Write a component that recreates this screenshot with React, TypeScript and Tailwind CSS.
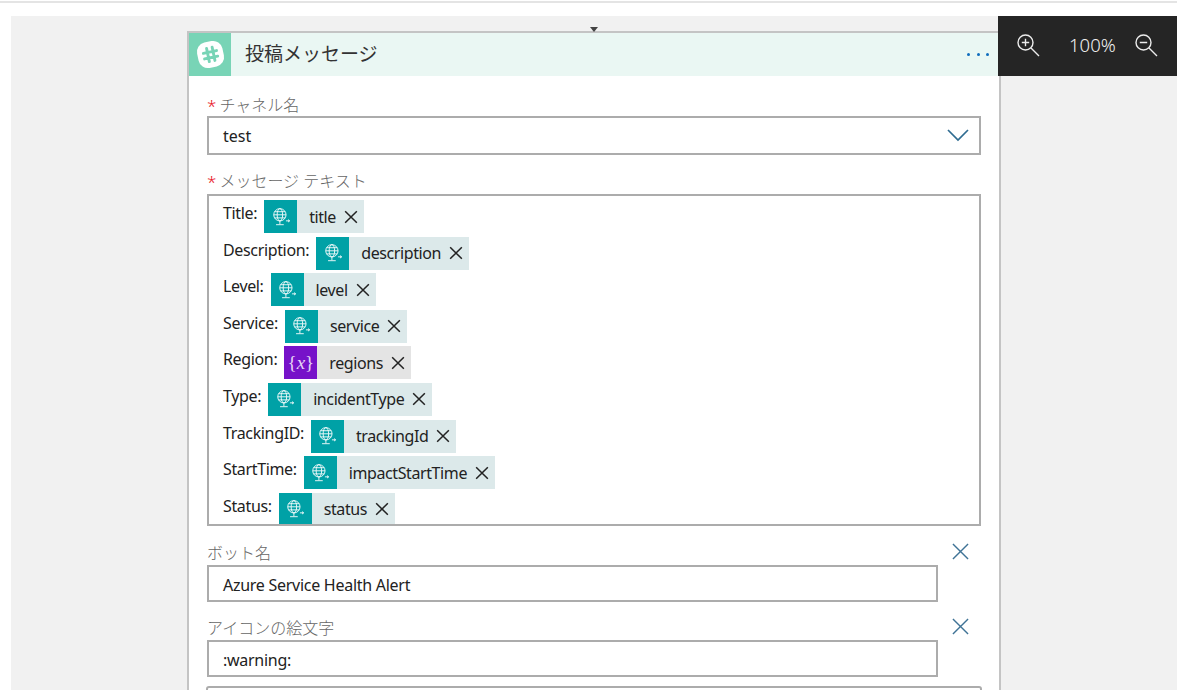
import React from "react"

const FONT = "font-['Noto_Sans','Noto_Sans_CJK_JP',sans-serif]"

type Row = { label: string; token: string; kind?: "var" }

const rows: Row[] = [
    { label: "Title:", token: "title" },
    { label: "Description:", token: "description" },
    { label: "Level:", token: "level" },
    { label: "Service:", token: "service" },
    { label: "Region:", token: "regions", kind: "var" },
    { label: "Type:", token: "incidentType" },
    { label: "TrackingID:", token: "trackingId" },
    { label: "StartTime:", token: "impactStartTime" },
    { label: "Status:", token: "status" },
]

const GlobeIcon = () => (
    <svg width="22" height="22" viewBox="0 0 20 20" fill="none" stroke="#fff" strokeWidth="0.8">
        <circle cx="9" cy="8" r="5.6" />
        <ellipse cx="9" cy="8" rx="2.5" ry="5.6" />
        <path d="M3.4 8h11.2M4.2 5.2h9.6M4.2 10.8h9.6M9 13.6v3M5.5 17h7M14.5 13.5h3.2" />
        <path d="M16.4 12.4l1.5 1.1-1.5 1.1" />
    </svg>
)

const SmallX = () => (
    <svg width="14" height="14" viewBox="0 0 12 12" stroke="#222" strokeWidth="1.3" className="shrink-0">
        <path d="M1 1l10 10M11 1L1 11" />
    </svg>
)

const BlueX = () => (
    <svg width="17" height="17" viewBox="0 0 18 18" stroke="#3f7396" strokeWidth="1.5">
        <path d="M1 1l16 16M17 1L1 17" />
    </svg>
)

const Token = ({ name, kind }: { name: string; kind?: "var" }) => (
    <span className={`flex h-[33px] items-center ${kind === "var" ? "bg-[#e4e4e4]" : "bg-[#dce9ea]"}`}>
        <span className={`flex h-[33px] w-[33px] items-center justify-center ${kind === "var" ? "bg-[#7612c9]" : "bg-[#00a1a6]"}`}>
            {kind === "var"
                ? <span className="font-['Liberation_Serif',serif] text-[19px] text-[#e6d5f5]">{"{"}<i>x</i>{"}"}</span>
                : <GlobeIcon />}
        </span>
        <span className="ml-[12px] text-[16px] leading-none tracking-[-0.4px] text-[#222]">{name}</span>
        <span className="ml-[8px] mr-[6px] flex"><SmallX /></span>
    </span>
)

const Label = ({ text, required }: { text: string; required?: boolean }) => (
    <div className="flex h-[22px] items-center text-[16px] font-light leading-none text-[#666]">
        {required && <span className="mr-[3px] text-[17px] text-[#e81123]">*</span>}
        {text}
    </div>
)

const OptionalField = ({ label, value }: { label: string; value: string }) => (
    <div className="flex">
        <div className="w-[731px]">
            <div className="mb-[1px]"><Label text={label} /></div>
            <div className="flex h-[37px] items-center border-2 border-[#acacac] pl-[14px] pt-[3px] text-[16px] tracking-[-0.27px] text-[#222]">{value}</div>
        </div>
        <div className="ml-[14px] pt-[1px]"><BlueX /></div>
    </div>
)

export default function App() {
    return (
        <div className={`relative h-[690px] w-[1200px] overflow-hidden bg-white ${FONT}`}>
            <div className="mt-[1px] h-[2px] w-[1177px] bg-[#e4e4e4]" />
            <div className="ml-[11px] mt-[13px] h-[674px] w-[1166px] bg-[#f1f1f1] pt-[15px]">
                <div className="ml-[176px] h-[700px] w-[814px] border-x-2 border-t-2 border-[#c4c4c4] bg-white">
                    <div className="flex h-[43px] items-center bg-[#eaf7f3]">
                        <div className="flex h-[43px] w-[42px] items-center justify-center bg-[#78d4b6]">
                            <svg width="31" height="31" viewBox="0 0 30 30">
                                <g transform="rotate(-12 15 15)">
                                    <rect x="2.500" y="2.500" width="25" height="25" rx="9" fill="#fff" />
                                    <path d="M12.500 8.500v13M18 8.500v13M8.500 12.500h13M8.500 18h13" stroke="#78d4b6" strokeWidth="2.800" strokeLinecap="round" fill="none" />
                                </g>
                            </svg>
                        </div>
                        <div className="ml-[14px] text-[19px] text-[#333]">投稿メッセージ</div>
                        <div className="ml-auto mr-[10px] flex gap-[6.500px]">
                            <span className="h-[3px] w-[3px] rounded-full bg-[#0f6cbd]" />
                            <span className="h-[3px] w-[3px] rounded-full bg-[#0f6cbd]" />
                            <span className="h-[3px] w-[3px] rounded-full bg-[#0f6cbd]" />
                        </div>
                    </div>
                    <div className="px-[18px] pt-[18px]">
                        <Label text="チャネル名" required />
                        <div className="flex h-[39px] items-center justify-between border-2 border-[#acacac] pl-[14px] pr-[10px] text-[16px] text-[#222]">
                            test
                            <svg width="22" height="13" viewBox="0 0 22 13" fill="none" stroke="#2f6c91" strokeWidth="1.7">
                                <path d="M1 1l10 10L21 1" />
                            </svg>
                        </div>
                        <div className="mb-[2px] mt-[15px]"><Label text="メッセージ テキスト" required /></div>
                        <div className="h-[332px] overflow-hidden border-2 border-[#acacac] pl-[14px] pt-[4px]">
                            <div className="flex flex-col gap-[3.6px]">
                                {rows.map((r) => (
                                    <div key={r.label} className="flex items-start gap-[7px]">
                                        <span className="text-[16px] leading-[26px] tracking-[-0.35px] text-[#222]">{r.label}</span>
                                        <Token name={r.token} kind={r.kind} />
                                    </div>
                                ))}
                            </div>
                        </div>
                        <div className="mt-[16px] flex flex-col gap-[15px]">
                            <OptionalField label="ボット名" value="Azure Service Health Alert" />
                            <OptionalField label="アイコンの絵文字" value=":warning:" />
                        </div>
                        <div className="-mx-px mt-[9px] h-[20px] rounded-t-[3px] border-2 border-[#acacac]" />
                    </div>
                </div>
            </div>
            <div className="absolute left-[590px] top-[27px] h-0 w-0 border-x-[4px] border-t-[5px] border-x-transparent border-t-[#444]" />
            <div className="absolute left-[998px] top-[16px] flex h-[60px] w-[179px] items-center bg-[#252525] pb-[2px] text-white">
                <svg width="24" height="24" viewBox="0 0 24 24" fill="none" stroke="#ececec" strokeWidth="1.4" className="ml-[18px]">
                    <circle cx="9.500" cy="9.500" r="7.500" />
                    <path d="M15 15l8 8M5.800 9.500h7.400M9.500 5.800v7.400" />
                </svg>
                <span className="ml-[29px] text-[18.500px] font-light text-[#f0f0f0]">100%</span>
                <svg width="24" height="24" viewBox="0 0 24 24" fill="none" stroke="#ececec" strokeWidth="1.4" className="ml-[18px]">
                    <circle cx="9.500" cy="9.500" r="7.500" />
                    <path d="M15 15l8 8M5.800 9.500h7.400" />
                </svg>
            </div>
        </div>
    )
}
